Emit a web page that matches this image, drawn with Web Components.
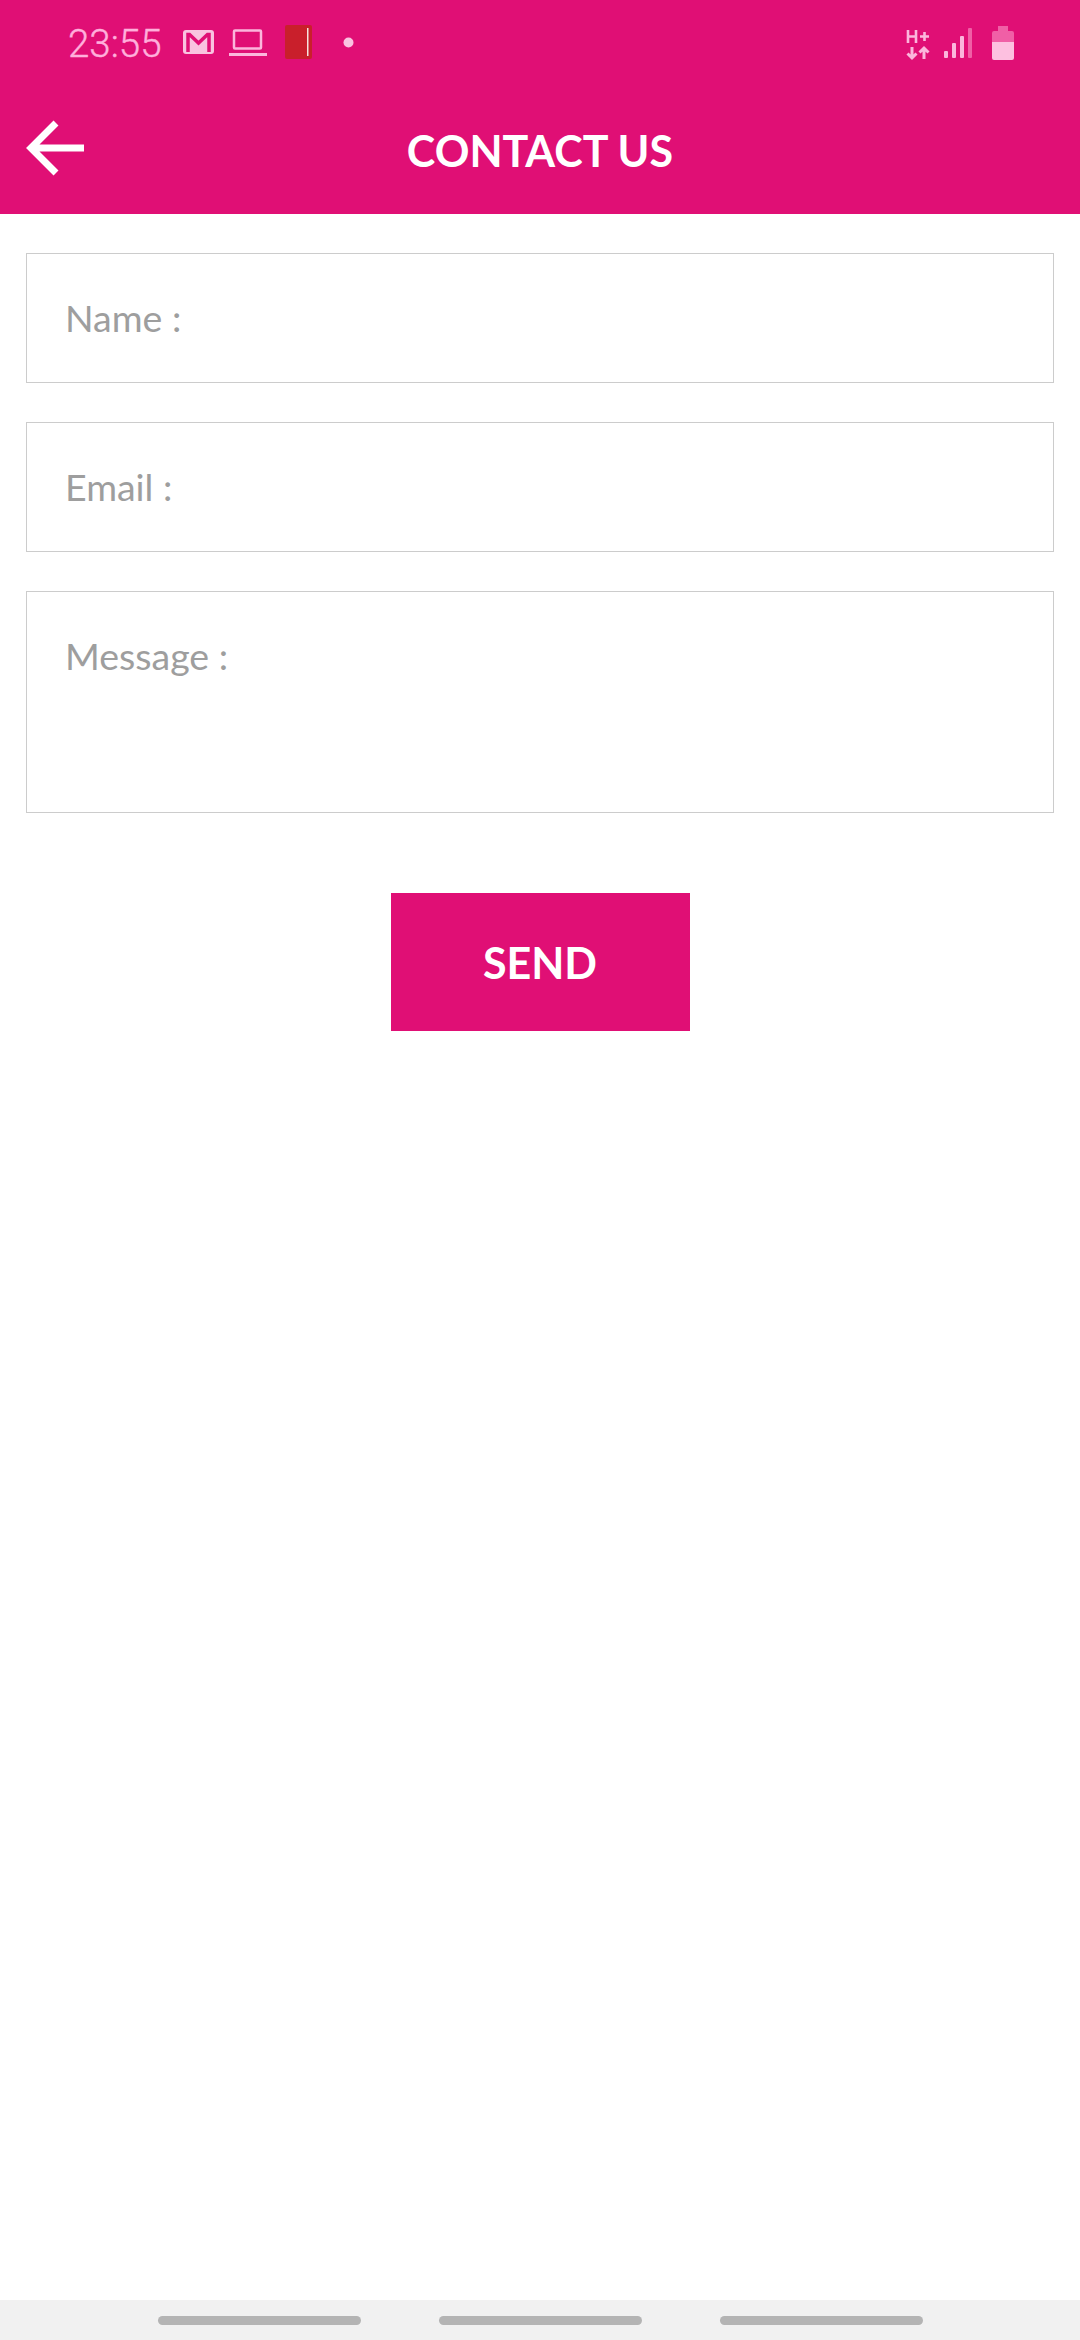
<!DOCTYPE html>
<html>
<head>
<meta charset="utf-8">
<title>Contact us</title>
<style>
  html, body { margin: 0; padding: 0; background: #fff; }
  body { width: 1080px; height: 2340px; display: flex; flex-direction: column; font-family: Lato, "Liberation Sans", sans-serif; }
  contact-form { flex: 1; }
</style>
</head>
<body>
<app-header title="CONTACT US"></app-header>
<contact-form>
  <form-field label="Name :"></form-field>
  <form-field label="Email :"></form-field>
  <form-field label="Message :" tall></form-field>
  <send-button>SEND</send-button>
</contact-form>
<nav-pills></nav-pills>

<script>
(function() {
  const statusTemplate = document.createElement('template');
  statusTemplate.innerHTML = `
    <style>
      :host { display: flex; align-items: flex-start; height: 72px; color: #ffb0dc; }
      .time { font: 300 38.500px/44px Roboto, sans-serif; margin: 22px 0 0 68px; width: 114px; -webkit-text-stroke: 0.4px #ffb0dc; }
      svg { display: block; flex: none; }
      .spacer { flex: 1; }
    </style>
    <span class="time">23:55</span>
    <svg style="margin:29px 0 0 0" width="33" height="26" viewBox="0 0 33 26">
      <rect x="1" y="1" width="31" height="24" rx="3" fill="#f9c3e0"/>
      <path d="M6 23V5.500h1.500L16.500 14l9-8.500H27V23" fill="none" stroke="#e00f75" stroke-width="3.500"/>
    </svg>
    <svg style="margin:29px 0 0 14px" width="38" height="27" viewBox="0 0 38 27">
      <rect x="5" y="1.500" width="27" height="18" rx="1" fill="none" stroke="#fbb6dc" stroke-width="2.500"/>
      <rect x="0" y="24" width="38" height="3" fill="#fbb6dc"/>
    </svg>
    <svg style="margin:25px 0 0 18px" width="28" height="34" viewBox="0 0 28 34">
      <rect width="27" height="34" rx="2" fill="#c91f2b"/>
      <rect x="22" y="3" width="1.500" height="28" fill="#f6e3dc"/>
    </svg>
    <svg style="margin:37px 0 0 30px" width="11" height="11" viewBox="0 0 11 11">
      <circle cx="5.500" cy="5.500" r="5" fill="#f9c3e0"/>
    </svg>
    <span class="spacer"></span>
    <svg style="margin:27px 0 0 0" width="24" height="34" viewBox="0 0 24 34">
      <path d="M2 3v13M10 3v13M2 9.500h8M14 9.500h9M18.500 5v9" fill="none" stroke="#fbb6dc" stroke-width="2.600"/>
      <path d="M6 20v11M1.500 26.500L6 31l4.500-4.500M18 32V21M13.500 25.500L18 21l4.500 4.500" fill="none" stroke="#fbb6dc" stroke-width="3"/>
    </svg>
    <svg style="margin:28px 0 0 13px" width="29" height="31" viewBox="0 0 29 31">
      <rect x="1" y="23" width="4" height="7" rx="1" fill="#fbb6dc"/>
      <rect x="9" y="15" width="4" height="15" rx="1" fill="#fbb6dc"/>
      <rect x="17" y="8" width="4" height="22" rx="1" fill="#fbb6dc"/>
      <rect x="25" y="0" width="4" height="30" rx="1" fill="#f05fa6"/>
    </svg>
    <svg style="margin:26px 66px 0 20px" width="22" height="34" viewBox="0 0 22 34">
      <path d="M6 0h10v5h4a2 2 0 0 1 2 2v15H0V7a2 2 0 0 1 2-2h4z" fill="#f05fa6"/>
      <path d="M0 16h22v16a2 2 0 0 1-2 2H2a2 2 0 0 1-2-2z" fill="#fdc0e0"/>
    </svg>
  `;

  class StatusBar extends HTMLElement {
    constructor() {
      super();
      this.attachShadow({mode: 'open'});
      this.shadowRoot.appendChild(statusTemplate.content.cloneNode(true));
    }
  }

  const headerTemplate = document.createElement('template');
  headerTemplate.innerHTML = `
    <style>
      :host { display: block; height: 214px; background: #e00f75; }
      .bar { height: 142px; padding-top: 14px; box-sizing: border-box; display: grid; grid-template-columns: 108px 1fr 108px; align-items: center; }
      .back { display: block; margin: -4px 0 0 26px; }
      h1 { margin: 0; text-align: center; color: #fff; font: 700 43px/1 Lato, sans-serif; }
    </style>
    <status-bar></status-bar>
    <div class="bar">
      <svg class="back" width="58" height="58" viewBox="0 0 58 58">
        <path d="M30 4L5 29l25 25M5 29h53" fill="none" stroke="#fff" stroke-width="7"/>
      </svg>
      <h1></h1>
    </div>
  `;

  class AppHeader extends HTMLElement {
    constructor() {
      super();
      this.attachShadow({mode: 'open'});
      this.shadowRoot.appendChild(headerTemplate.content.cloneNode(true));
    }

    connectedCallback() {
      this.shadowRoot.querySelector('h1').textContent = this.getAttribute('title');
    }
  }

  const formTemplate = document.createElement('template');
  formTemplate.innerHTML = `
    <style>
      :host { display: flex; flex-direction: column; align-items: stretch; gap: 39px; padding: 39px 26px 0; }
    </style>
    <slot></slot>
  `;

  class ContactForm extends HTMLElement {
    constructor() {
      super();
      this.attachShadow({mode: 'open'});
      this.shadowRoot.appendChild(formTemplate.content.cloneNode(true));
    }
  }

  const fieldTemplate = document.createElement('template');
  fieldTemplate.innerHTML = `
    <style>
      :host { display: block; box-sizing: border-box; height: 130px; border: 1px solid #cccccc; padding: 41px 38px 0; color: #9e9e9e; font: 400 37.500px/46px Lato, sans-serif; }
      :host([tall]) { height: 222px; padding-top: 41px; }
    </style>
    <span></span>
  `;

  class FormField extends HTMLElement {
    constructor() {
      super();
      this.attachShadow({mode: 'open'});
      this.shadowRoot.appendChild(fieldTemplate.content.cloneNode(true));
    }

    connectedCallback() {
      this.shadowRoot.querySelector('span').textContent = this.getAttribute('label');
    }
  }

  const buttonTemplate = document.createElement('template');
  buttonTemplate.innerHTML = `
    <style>
      :host { display: flex; align-items: center; justify-content: center; align-self: center; width: 299px; height: 138px; margin-top: 41px; background: #e00f75; color: #fff; font: 700 43px/1 Lato, sans-serif; }
    </style>
    <slot></slot>
  `;

  class SendButton extends HTMLElement {
    constructor() {
      super();
      this.attachShadow({mode: 'open'});
      this.shadowRoot.appendChild(buttonTemplate.content.cloneNode(true));
    }
  }

  const navTemplate = document.createElement('template');
  navTemplate.innerHTML = `
    <style>
      :host { display: flex; justify-content: center; gap: 78px; height: 40px; padding-top: 16px; box-sizing: border-box; background: #f1f1f1; }
      i { display: block; width: 203px; height: 9px; border-radius: 5px; background: #b4b4b4; }
    </style>
    <i></i><i></i><i></i>
  `;

  class NavPills extends HTMLElement {
    constructor() {
      super();
      this.attachShadow({mode: 'open'});
      this.shadowRoot.appendChild(navTemplate.content.cloneNode(true));
    }
  }

  window.customElements.define('status-bar', StatusBar);
  window.customElements.define('app-header', AppHeader);
  window.customElements.define('contact-form', ContactForm);
  window.customElements.define('form-field', FormField);
  window.customElements.define('send-button', SendButton);
  window.customElements.define('nav-pills', NavPills);
})();
</script>
</body>
</html>
